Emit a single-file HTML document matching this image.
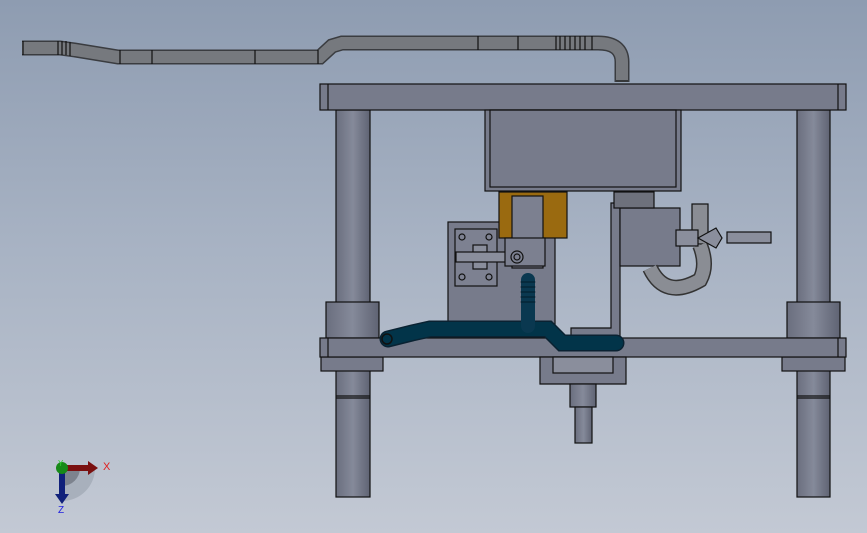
<!DOCTYPE html>
<html><head><style>
html,body{margin:0;padding:0}
body{width:867px;height:533px;overflow:hidden;background:linear-gradient(180deg,#8e9cb1 0%,#a7b2c3 45%,#c3c9d4 100%);font-family:"Liberation Sans",sans-serif}
svg{position:absolute;left:0;top:0}
</style></head><body>
<svg width="867" height="533" viewBox="0 0 867 533">
<defs>
<linearGradient id="col" x1="0" x2="1"><stop offset="0" stop-color="#6a6e7e"/><stop offset="0.5" stop-color="#858a9a"/><stop offset="1" stop-color="#5f6373"/></linearGradient>
</defs>
<g stroke="#111" stroke-width="1.2">
<!-- hose top -->
<path d="M22 48 L60 48 L75 50 L118 57 L320 57 L332 46 L342 43 L598 43 Q622 43 622 62 L622 82" fill="none" stroke="#3a3c40" stroke-width="15"/>
<path d="M22 48 L60 48 L75 50 L118 57 L320 57 L332 46 L342 43 L598 43 Q622 43 622 62 L622 82" fill="none" stroke="#76797e" stroke-width="12"/>
<g fill="none" stroke-width="1.2"><path d="M23 41 v14 M58 41v14 M62 41v14 M66 41v14 M70 42v14 M120 50v14 M152 50v14 M255 50v14 M318 50v14 M478 36v14 M518 36v14 M556 36v14 M560 36v14 M565 36v14 M570 36v14 M575 36v14 M580 36v14 M585 36v14 M592 36v14 M616 81h12"/></g>
<!-- columns -->
<rect x="336" y="110" width="34" height="387" fill="url(#col)"/>
<rect x="797" y="110" width="33" height="387" fill="url(#col)"/>
<path d="M336 396h34 M336 398h34 M797 396h33 M797 398h33" fill="none"/>
<rect x="326" y="302" width="53" height="36" fill="url(#col)"/>
<rect x="787" y="302" width="53" height="36" fill="url(#col)"/>
<rect x="321" y="357" width="62" height="14" fill="#777b8b"/>
<rect x="782" y="357" width="63" height="14" fill="#777b8b"/>
<!-- top plate -->
<rect x="320" y="84" width="526" height="26" fill="#777b8b"/>
<path d="M328 84v26 M838 84v26" fill="none"/>
<!-- box -->
<rect x="485" y="110" width="196" height="81" fill="#777b8b"/>
<rect x="490" y="110" width="186" height="77" fill="none"/>
<!-- left plate -->
<rect x="448" y="222" width="107" height="116" fill="#777b8b"/>
<rect x="455" y="229" width="42" height="57" fill="#7d8191"/>
<g fill="none"><circle cx="462" cy="237" r="3"/><circle cx="489" cy="237" r="3"/><circle cx="462" cy="277" r="3"/><circle cx="489" cy="277" r="3"/></g>
<rect x="473" y="245" width="14" height="24" fill="#8a8e9c"/>
<rect x="456" y="252" width="60" height="10" fill="#8a8e9c"/>
<!-- orange bracket -->
<rect x="499" y="192" width="68" height="46" fill="#9a6a10"/>
<rect x="512" y="196" width="31" height="72" fill="#7c8090"/>
<rect x="505" y="238" width="40" height="28" fill="#7c8090"/>
<circle cx="517" cy="257" r="6" fill="#7c8090"/><circle cx="517" cy="257" r="3" fill="none"/>
<!-- right L bracket -->
<path d="M611 203 h9 v135 h-49 v-10 h40 z" fill="#777b8b"/>
<rect x="620" y="208" width="60" height="58" fill="#777b8b"/>
<rect x="614" y="192" width="40" height="16" fill="#6e717c"/>
<rect x="692" y="204" width="16" height="40" fill="#8a8d94"/>
<path d="M650 268 Q665 300 700 280 Q708 265 700 245" fill="none" stroke="#333" stroke-width="16"/>
<path d="M650 268 Q665 300 700 280 Q708 265 700 245" fill="none" stroke="#8a8d94" stroke-width="13"/>
<rect x="676" y="230" width="22" height="16" fill="#8a8e9c"/>
<path d="M698 238 L716 228 L722 238 L716 248 z" fill="#8a8e9c"/>
<rect x="727" y="232" width="44" height="11" fill="#8a8e9c"/>
<!-- lower plate -->
<rect x="320" y="338" width="526" height="19" fill="#777b8b"/>
<path d="M328 338v19 M838 338v19" fill="none"/>
<!-- center bracket -->
<path d="M540 357 h86 v27 h-86 z" fill="#777b8b"/>
<rect x="553" y="357" width="60" height="16" fill="#8a8e9c"/>
<rect x="570" y="384" width="26" height="23" fill="url(#col)"/>
<rect x="575" y="407" width="17" height="36" fill="url(#col)"/>
</g>
<!-- blue pipe -->
<g fill="none" stroke-linecap="round">
<path d="M388 339 L412 333 L430 329 L548 329 L562 343 L616 343" stroke="#0a2232" stroke-width="17"/>
<path d="M388 339 L412 333 L430 329 L548 329 L562 343 L616 343" stroke="#023449" stroke-width="14"/>
<path d="M528 326 L528 280" stroke="#0a3850" stroke-width="14"/>
<path d="M521 282h14 M521 287h14 M521 292h14 M521 297h14 M521 302h14" stroke="#021c2a" stroke-width="1"/>
<circle cx="387" cy="339" r="5" stroke="#111" stroke-width="1.5"/>
</g>
<!-- triad -->
<path d="M62 468 L95 468 A33 33 0 0 1 62 501 z" fill="#9aa1ad" opacity="0.6"/>
<path d="M62 468 L80 468 A18 18 0 0 1 62 486 z" fill="#6b707a" opacity="0.7"/>
<rect x="62" y="465" width="28" height="6" fill="#7a1010"/><path d="M88 461 L98 468 L88 475 z" fill="#7a1010"/>
<rect x="59" y="468" width="6" height="28" fill="#10207a"/><path d="M55 494 L62 504 L69 494 z" fill="#10207a"/>
<circle cx="62" cy="468" r="6" fill="#178a17"/>
<text x="103" y="470" font-size="11" fill="#e02020" font-family="Liberation Sans,sans-serif">X</text>
<text x="58" y="513" font-size="10" fill="#2020e0" font-family="Liberation Sans,sans-serif">Z</text>
<text x="58" y="466" font-size="8" fill="#30d030" font-family="Liberation Sans,sans-serif">Y</text>
</svg>
</body></html>
